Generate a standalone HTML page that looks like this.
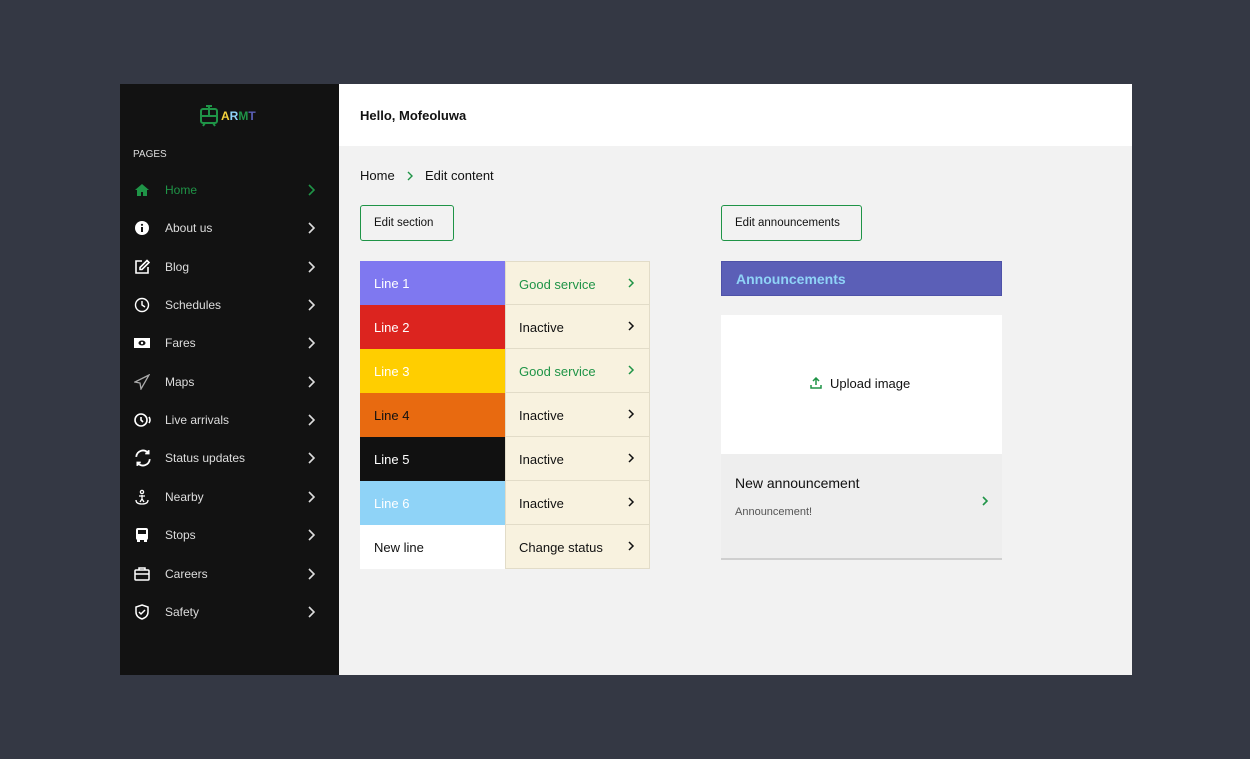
<!DOCTYPE html>
<html><head><style>
*{margin:0;padding:0;box-sizing:border-box}
body{width:1250px;height:759px;background:#343844;position:relative;font-family:"Liberation Sans",sans-serif;overflow:hidden}
.sb{position:absolute;left:120px;top:84px;width:219px;height:591px;background:#121212}
.main{position:absolute;left:339px;top:84px;width:793px;height:591px;background:#f2f2f2}
.hdr{height:62px;background:#fff;padding:24px 0 0 21px;font-size:13px;font-weight:bold;color:#111}
.item{position:absolute;left:0;width:219px;height:20px;color:#ddd;font-size:12px}
.item .ic{position:absolute;left:14px;top:2px;width:16px;height:16px}
.item .t{position:absolute;left:45px;top:3px}
.item .ch{position:absolute;left:187px;top:4px}
.abs{position:absolute}
.btn{position:absolute;height:36px;border:1px solid #1f9447;border-radius:3px;font-size:11.5px;color:#111;padding:11px 13px 0}
.row{position:absolute;left:360px;width:290px;height:44px;font-size:13px}
.row .a{position:absolute;left:0;top:0;width:145px;height:44px;padding:15px 0 0 14px}
.row .b{position:absolute;left:145px;top:0;width:145px;height:44px;background:#f8f2df;border:1px solid #e2dcc8;border-top:none;padding:15px 0 0 13px;color:#111}
.row .b svg{position:absolute;right:14px;top:16px}
</style></head><body>
<div class="sb">
  <svg class="abs" style="left:80px;top:21px" width="18" height="22" viewBox="0 0 18 22" fill="none" stroke="#1f9447" stroke-width="2"><path d="M6 1h6M9 1v3"/><rect x="1" y="4" width="16" height="14" rx="2"/><path d="M1 11h16M9 4v7M3 21l2-3M15 21l-2-3"/></svg>
  <div class="abs" style="left:101px;top:25px;font-size:12px;font-weight:bold"><span style="color:#f6d33c">A</span><span style="color:#8fd3f7">R</span><span style="color:#1f9447">M</span><span style="color:#5b5fb7">T</span></div>
  <div class="abs" style="left:13px;top:65px;font-size:10px;color:#ddd">PAGES</div>
  <div class="item" style="top:96px;color:#1f9447"><svg class="ic" viewBox="0 0 16 16"><path d="M8 2L1 8h2v6h4v-4h2v4h4V8h2z" fill="#1f9447"/></svg><span class="t">Home</span><svg class="ch" width="8" height="12" viewBox="0 0 8 12"><path d="M2 1l5 5-5 5" stroke="#1f9447" stroke-width="1.6" fill="none"/></svg></div>
  <div class="item" style="top:134px"><svg class="ic" viewBox="0 0 16 16"><circle cx="8" cy="8" r="7" fill="#fff"/><rect x="7" y="7" width="2" height="5" fill="#121212"/><circle cx="8" cy="4.8" r="1.1" fill="#121212"/></svg><span class="t">About us</span><svg class="ch" width="8" height="12" viewBox="0 0 8 12"><path d="M2 1l5 5-5 5" stroke="#ddd" stroke-width="1.6" fill="none"/></svg></div>
  <div class="item" style="top:173px"><svg class="ic" viewBox="0 0 16 16" fill="none" stroke="#fff" stroke-width="1.6"><path d="M8 2H2v12h12V8"/><path d="M13 1.5l2 2-7 7H6v-2z"/></svg><span class="t">Blog</span><svg class="ch" width="8" height="12" viewBox="0 0 8 12"><path d="M2 1l5 5-5 5" stroke="#ddd" stroke-width="1.6" fill="none"/></svg></div>
  <div class="item" style="top:211px"><svg class="ic" viewBox="0 0 16 16" fill="none" stroke="#fff" stroke-width="1.4"><circle cx="8" cy="8" r="6.5"/><path d="M8 4v4l3 2"/></svg><span class="t">Schedules</span><svg class="ch" width="8" height="12" viewBox="0 0 8 12"><path d="M2 1l5 5-5 5" stroke="#ddd" stroke-width="1.6" fill="none"/></svg></div>
  <div class="item" style="top:249px"><svg class="ic" viewBox="0 0 16 16"><rect x="0" y="3" width="16" height="10" fill="#fff"/><ellipse cx="8" cy="8" rx="3.5" ry="2.5" fill="#121212"/><circle cx="8" cy="8" r="1.2" fill="#fff"/></svg><span class="t">Fares</span><svg class="ch" width="8" height="12" viewBox="0 0 8 12"><path d="M2 1l5 5-5 5" stroke="#ddd" stroke-width="1.6" fill="none"/></svg></div>
  <div class="item" style="top:288px"><svg class="ic" viewBox="0 0 16 16" fill="none" stroke="#aaa" stroke-width="1.3"><path d="M15 1L1 8l5 1 1 6z"/></svg><span class="t">Maps</span><svg class="ch" width="8" height="12" viewBox="0 0 8 12"><path d="M2 1l5 5-5 5" stroke="#ddd" stroke-width="1.6" fill="none"/></svg></div>
  <div class="item" style="top:326px"><svg class="ic" viewBox="0 0 18 16" fill="none" stroke="#fff" stroke-width="1.6" style="width:18px"><circle cx="7" cy="8" r="6"/><path d="M7 5v3l2 2M15 5q2 3 0 6"/></svg><span class="t">Live arrivals</span><svg class="ch" width="8" height="12" viewBox="0 0 8 12"><path d="M2 1l5 5-5 5" stroke="#ddd" stroke-width="1.6" fill="none"/></svg></div>
  <div class="item" style="top:364px"><svg class="ic" viewBox="0 0 16 16" fill="none" stroke="#fff" stroke-width="1.6" style="width:18px;height:18px;top:1px"><path d="M2 7a6 6 0 0 1 11-3M14 9a6 6 0 0 1-11 3M13 1v3h-3M3 15v-3h3"/></svg><span class="t">Status updates</span><svg class="ch" width="8" height="12" viewBox="0 0 8 12"><path d="M2 1l5 5-5 5" stroke="#ddd" stroke-width="1.6" fill="none"/></svg></div>
  <div class="item" style="top:403px"><svg class="ic" viewBox="0 0 16 16" fill="none" stroke="#fff" stroke-width="1.3"><circle cx="8" cy="3" r="1.6"/><path d="M5 7h6M8 6v4l-2 3M8 10l2 3M2 11q0 4 6 4t6-4"/></svg><span class="t">Nearby</span><svg class="ch" width="8" height="12" viewBox="0 0 8 12"><path d="M2 1l5 5-5 5" stroke="#ddd" stroke-width="1.6" fill="none"/></svg></div>
  <div class="item" style="top:441px"><svg class="ic" viewBox="0 0 16 16"><rect x="2" y="1" width="12" height="12" rx="2" fill="#fff"/><rect x="4" y="3" width="8" height="4" fill="#121212"/><rect x="3" y="12" width="3" height="3" fill="#fff"/><rect x="10" y="12" width="3" height="3" fill="#fff"/></svg><span class="t">Stops</span><svg class="ch" width="8" height="12" viewBox="0 0 8 12"><path d="M2 1l5 5-5 5" stroke="#ddd" stroke-width="1.6" fill="none"/></svg></div>
  <div class="item" style="top:480px"><svg class="ic" viewBox="0 0 16 16" fill="none" stroke="#fff" stroke-width="1.5"><rect x="1" y="4" width="14" height="10" rx="1"/><path d="M5 4V2h6v2M1 8h14"/></svg><span class="t">Careers</span><svg class="ch" width="8" height="12" viewBox="0 0 8 12"><path d="M2 1l5 5-5 5" stroke="#ddd" stroke-width="1.6" fill="none"/></svg></div>
  <div class="item" style="top:518px"><svg class="ic" viewBox="0 0 16 16" fill="none" stroke="#fff" stroke-width="1.5"><path d="M8 1l6 2v5q0 5-6 7-6-2-6-7V3z"/><path d="M5 8l2 2 4-4"/></svg><span class="t">Safety</span><svg class="ch" width="8" height="12" viewBox="0 0 8 12"><path d="M2 1l5 5-5 5" stroke="#ddd" stroke-width="1.6" fill="none"/></svg></div>
</div>
<div class="main"><div class="hdr">Hello, Mofeoluwa</div></div>
<div class="abs" style="left:360px;top:168px;font-size:13px;color:#111">Home</div>
<svg class="abs" style="left:407px;top:171px" width="7" height="10" viewBox="0 0 7 10"><path d="M1 1l4 4-4 4" stroke="#1f9447" stroke-width="1.4" fill="none"/></svg>
<div class="abs" style="left:425px;top:168px;font-size:13px;color:#111">Edit content</div>
<div class="btn" style="left:360px;top:205px;width:94px">Edit section</div>
<div class="btn" style="left:721px;top:205px;width:141px">Edit announcements</div>

<div class="row" style="top:261px"><div class="a" style="background:#7f78f0;color:#fff">Line 1</div><div class="b" style="border-top:1px solid #e2dcc8;color:#1f9447">Good service<svg width="7" height="10" viewBox="0 0 7 10"><path d="M1 1l4 4-4 4" stroke="#1f9447" stroke-width="1.5" fill="none"/></svg></div></div>
<div class="row" style="top:305px"><div class="a" style="background:#dc241f;color:#fff">Line 2</div><div class="b">Inactive<svg width="7" height="10" viewBox="0 0 7 10"><path d="M1 1l4 4-4 4" stroke="#111" stroke-width="1.5" fill="none"/></svg></div></div>
<div class="row" style="top:349px"><div class="a" style="background:#ffce00;color:#fff">Line 3</div><div class="b" style="color:#1f9447">Good service<svg width="7" height="10" viewBox="0 0 7 10"><path d="M1 1l4 4-4 4" stroke="#1f9447" stroke-width="1.5" fill="none"/></svg></div></div>
<div class="row" style="top:393px"><div class="a" style="background:#e86a10;color:#111">Line 4</div><div class="b">Inactive<svg width="7" height="10" viewBox="0 0 7 10"><path d="M1 1l4 4-4 4" stroke="#111" stroke-width="1.5" fill="none"/></svg></div></div>
<div class="row" style="top:437px"><div class="a" style="background:#111;color:#fff">Line 5</div><div class="b">Inactive<svg width="7" height="10" viewBox="0 0 7 10"><path d="M1 1l4 4-4 4" stroke="#111" stroke-width="1.5" fill="none"/></svg></div></div>
<div class="row" style="top:481px"><div class="a" style="background:#8fd3f7;color:#fff">Line 6</div><div class="b">Inactive<svg width="7" height="10" viewBox="0 0 7 10"><path d="M1 1l4 4-4 4" stroke="#111" stroke-width="1.5" fill="none"/></svg></div></div>
<div class="row" style="top:525px"><div class="a" style="background:#fff;color:#111">New line</div><div class="b">Change status<svg width="7" height="10" viewBox="0 0 7 10"><path d="M1 1l4 4-4 4" stroke="#111" stroke-width="1.5" fill="none"/></svg></div></div>

<div class="abs" style="left:721px;top:261px;width:281px;height:35px;background:#5b5fb7;border:1px solid #4e52a8;color:#8fd3f7;font-size:14px;font-weight:bold;padding:9px 0 0 14px">Announcements</div>
<div class="abs" style="left:721px;top:315px;width:281px;height:139px;background:#fff"></div>
<svg class="abs" style="left:810px;top:377px" width="12" height="12" viewBox="0 0 12 12" fill="none" stroke="#1f9447" stroke-width="1.5"><path d="M6 8V1M3 4l3-3 3 3M1 8v3h10V8"/></svg>
<div class="abs" style="left:830px;top:376px;font-size:13px;color:#111">Upload image</div>
<div class="abs" style="left:721px;top:454px;width:281px;height:106px;background:#eeeeee;border-bottom:2px solid #cfcfcf"></div>
<div class="abs" style="left:735px;top:475px;font-size:14px;color:#111">New announcement</div>
<div class="abs" style="left:735px;top:506px;font-size:11px;color:#555">Announcement!</div>
<svg class="abs" style="left:982px;top:496px" width="7" height="10" viewBox="0 0 7 10"><path d="M1 1l4 4-4 4" stroke="#1f9447" stroke-width="1.6" fill="none"/></svg>
</body></html>
